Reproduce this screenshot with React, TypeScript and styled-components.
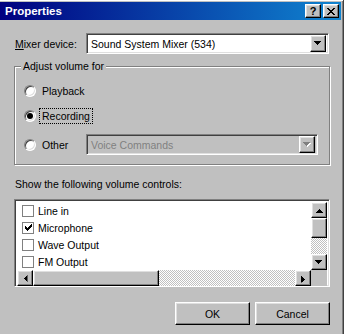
import React from "react";
import styled, { createGlobalStyle, css } from "styled-components";

const GlobalStyle = createGlobalStyle`
  html, body {
    margin: 0;
    padding: 0;
  }
  body {
    width: 344px;
    height: 334px;
    overflow: hidden;
    background: #e0e0e0;
    font-family: "Liberation Sans", Arial, sans-serif;
    font-size: 10.5px;
    color: #000;
  }
  * {
    box-sizing: border-box;
  }
`;

const raised = css`
  border: 1px solid;
  border-color: #fff #000 #000 #fff;
  box-shadow: inset -1px -1px #808080, inset 1px 1px #dfdfdf;
  background: #c0c0c0;
`;

const sunken = css`
  border: 1px solid;
  border-color: #808080 #fff #fff #808080;
  box-shadow: inset 1px 1px #404040, inset -1px -1px #dfdfdf;
`;

const checker = css`
  background: repeating-conic-gradient(#c0c0c0 0 25%, #fff 0 50%) 0 0 / 2px 2px;
`;

const Window = styled.div`
  width: 347px;
  height: 340px;
  margin: -1px 0 0 -3px;
  padding: 2px;
  background: #c0c0c0;
  border: 1px solid;
  border-color: #dfdfdf #404040 #404040 #dfdfdf;
  box-shadow: inset 1px 1px #fff, inset -1px -1px #808080;
  display: flex;
  flex-direction: column;
`;

const TitleBar = styled.div`
  height: 18px;
  display: flex;
  align-items: center;
  padding: 0 2px 0 5px;
  background: linear-gradient(90deg, #000080, #1084d0);
  color: #fff;
  font-weight: bold;
  font-size: 11.5px;
`;

const TitleText = styled.span`
  flex: 1;
`;

const TitleButtons = styled.div`
  display: flex;
  gap: 2px;
`;

const CaptionButton = styled.div`
  ${raised};
  width: 16px;
  height: 14px;
  display: flex;
  align-items: center;
  justify-content: center;
  color: #000;
  font-weight: bold;
  font-size: 11px;
  line-height: 1;
  padding-top: 1px;
`;

const Client = styled.div`
  padding: 13px 9px 0 14px;
  display: flex;
  flex-direction: column;
`;

const Row = styled.div`
  display: flex;
  align-items: center;
`;

const FieldLabel = styled.label<{ $w: number }>`
  width: ${(p) => p.$w}px;
  flex: none;
  padding-left: 1px;
`;

const Combo = styled.div<{ $w: number; $disabled?: boolean }>`
  ${sunken};
  width: ${(p) => p.$w}px;
  height: 21px;
  padding: 2px;
  display: flex;
  align-items: center;
  background: ${(p) => (p.$disabled ? "#c0c0c0" : "#fff")};
  color: ${(p) => (p.$disabled ? "#808080" : "#000")};
`;

const ComboText = styled.span`
  flex: 1;
  padding-left: 2px;
  white-space: nowrap;
`;

const ArrowButton = styled.div<{ $w?: number; $h?: number }>`
  ${raised};
  width: ${(p) => p.$w ?? 16}px;
  height: ${(p) => p.$h ?? 16}px;
  flex: none;
  display: flex;
  align-items: center;
  justify-content: center;
`;

const GroupBox = styled.div`
  position: relative;
  margin-top: 12px;
  width: 316px;
  height: 99px;
  border: 1px solid #808080;
  box-shadow: 1px 1px 0 #fff, inset 1px 1px 0 #fff;
  padding: 16px 0 0 9px;
  display: flex;
  flex-direction: column;
`;

const GroupTitle = styled.span`
  position: absolute;
  left: 6px;
  top: -7px;
  padding: 0 2px;
  background: #c0c0c0;
  line-height: 12px;
`;

const RadioRow = styled.div<{ $h: number; $gap: number }>`
  display: flex;
  align-items: center;
  height: ${(p) => p.$h}px;
  margin-bottom: ${(p) => p.$gap}px;
`;

const RadioLabel = styled.div<{ $w?: number }>`
  display: flex;
  align-items: center;
  gap: 6px;
  width: ${(p) => (p.$w ? `${p.$w}px` : "auto")};
  flex: none;
`;

const Radio = styled.span<{ $on?: boolean }>`
  position: relative;
  width: 12px;
  height: 12px;
  border-radius: 50%;
  background: #fff;
  border: 1px solid;
  border-color: #808080 #fff #fff #808080;
  box-shadow: inset 1px 1px #404040, inset -1px -1px #dfdfdf;
  &::after {
    content: "";
    display: ${(p) => (p.$on ? "block" : "none")};
    position: absolute;
    left: 2px;
    top: 2px;
    width: 6px;
    height: 6px;
    border-radius: 50%;
    background: #000;
  }
`;

const Focus = styled.span`
  outline: 1px dotted #000;
  outline-offset: 1px;
  padding: 0 1px;
  margin-left: -1px;
  line-height: 12px;
`;

const Caption = styled.div`
  margin-top: 13px;
  line-height: 12px;
  padding-left: 1px;
`;

const ListBox = styled.div`
  ${sunken};
  margin-top: 9px;
  width: 316px;
  height: 88px;
  padding: 2px;
  background: #fff;
  display: grid;
  grid-template-columns: 1fr 16px;
  grid-template-rows: 68px 16px;
`;

const Items = styled.div`
  padding-left: 5px;
  display: flex;
  flex-direction: column;
`;

const Item = styled.div`
  height: 17px;
  display: flex;
  align-items: center;
  gap: 4px;
  white-space: nowrap;
`;

const CheckBox = styled.span`
  width: 12px;
  height: 12px;
  border: 1px solid #808080;
  background: #fff;
  display: flex;
  align-items: center;
  justify-content: center;
`;

const VScroll = styled.div`
  display: flex;
  flex-direction: column;
`;

const HScroll = styled.div`
  display: flex;
`;

const Track = styled.div`
  flex: 1;
  ${checker};
`;

const Thumb = styled.div<{ $w?: number; $h?: number }>`
  ${raised};
  flex: none;
  width: ${(p) => (p.$w ? `${p.$w}px` : "auto")};
  height: ${(p) => (p.$h ? `${p.$h}px` : "auto")};
`;

const Corner = styled.div`
  background: #c0c0c0;
`;

const Buttons = styled.div`
  margin-top: 15px;
  width: 316px;
  display: flex;
  justify-content: flex-end;
  gap: 5px;
`;

const PushButton = styled.button`
  ${raised};
  width: 75px;
  height: 23px;
  font: inherit;
  color: #000;
  padding: 0;
`;

const ArrowSvg = styled.svg<{ $rot: number }>`
  display: block;
  transform: rotate(${(p) => p.$rot}deg);
  shape-rendering: crispEdges;
`;

const TRI = "M0 0h7v1h-1v1h-1v1h-1v1h-1v-1h-1v-1h-1v-1h-1z";

function Arrow({
  dir = "down",
  disabled = false,
}: {
  dir?: "down" | "up" | "left" | "right";
  disabled?: boolean;
}) {
  const rot = { down: 0, up: 180, left: 90, right: -90 }[dir];
  return (
    <ArrowSvg $rot={rot} width="8" height="5" viewBox="0 0 8 5">
      {disabled && <path d={TRI} fill="#fff" transform="translate(1 1)" />}
      <path d={TRI} fill={disabled ? "#808080" : "#000"} />
    </ArrowSvg>
  );
}

function CheckMark() {
  const cols = [2, 3, 4, 3, 2, 1, 0];
  return (
    <svg width="7" height="7" viewBox="0 0 7 7" shapeRendering="crispEdges">
      {cols.map((y, x) => (
        <rect key={x} x={x} y={y} width="1" height="3" fill="#000" />
      ))}
    </svg>
  );
}

function CloseGlyph() {
  const rows: [number, number][][] = [
    [[0, 2], [6, 2]],
    [[1, 2], [5, 2]],
    [[2, 4]],
    [[3, 2]],
    [[2, 4]],
    [[1, 2], [5, 2]],
    [[0, 2], [6, 2]],
  ];
  return (
    <svg width="8" height="7" viewBox="0 0 8 7" shapeRendering="crispEdges">
      {rows.map((segs, y) =>
        segs.map(([x, w]) => (
          <rect key={`${y}-${x}`} x={x} y={y} width={w} height="1" fill="#000" />
        ))
      )}
    </svg>
  );
}

const controls = [
  { name: "Line in", on: false },
  { name: "Microphone", on: true },
  { name: "Wave Output", on: false },
  { name: "FM Output", on: false },
];

export default function App() {
  return (
    <>
      <GlobalStyle />
      <Window>
        <TitleBar>
          <TitleText>Properties</TitleText>
          <TitleButtons>
            <CaptionButton>?</CaptionButton>
            <CaptionButton>
              <CloseGlyph />
            </CaptionButton>
          </TitleButtons>
        </TitleBar>
        <Client>
          <Row>
            <FieldLabel $w={72}>
              <u>M</u>ixer device:
            </FieldLabel>
            <Combo $w={243}>
              <ComboText>Sound System Mixer (534)</ComboText>
              <ArrowButton $h={17}>
                <Arrow />
              </ArrowButton>
            </Combo>
          </Row>

          <GroupBox>
            <GroupTitle>Adjust volume for</GroupTitle>
            <RadioRow $h={16} $gap={9}>
              <RadioLabel>
                <Radio />
                <span>Playback</span>
              </RadioLabel>
            </RadioRow>
            <RadioRow $h={16} $gap={10}>
              <RadioLabel>
                <Radio $on />
                <Focus>Recording</Focus>
              </RadioLabel>
            </RadioRow>
            <RadioRow $h={21} $gap={0}>
              <RadioLabel $w={62}>
                <Radio />
                <span>Other</span>
              </RadioLabel>
              <Combo $w={232} $disabled>
                <ComboText>Voice Commands</ComboText>
                <ArrowButton $h={17}>
                  <Arrow disabled />
                </ArrowButton>
              </Combo>
            </RadioRow>
          </GroupBox>

          <Caption>Show the following volume controls:</Caption>

          <ListBox>
            <Items>
              {controls.map((c) => (
                <Item key={c.name}>
                  <CheckBox>{c.on && <CheckMark />}</CheckBox>
                  <span>{c.name}</span>
                </Item>
              ))}
            </Items>
            <VScroll>
              <ArrowButton>
                <Arrow dir="up" />
              </ArrowButton>
              <Thumb $h={20} />
              <Track />
              <ArrowButton>
                <Arrow dir="down" />
              </ArrowButton>
            </VScroll>
            <HScroll>
              <ArrowButton>
                <Arrow dir="left" />
              </ArrowButton>
              <Thumb $w={126} />
              <Track />
              <ArrowButton>
                <Arrow dir="right" />
              </ArrowButton>
            </HScroll>
            <Corner />
          </ListBox>

          <Buttons>
            <PushButton>OK</PushButton>
            <PushButton>Cancel</PushButton>
          </Buttons>
        </Client>
      </Window>
    </>
  );
}
